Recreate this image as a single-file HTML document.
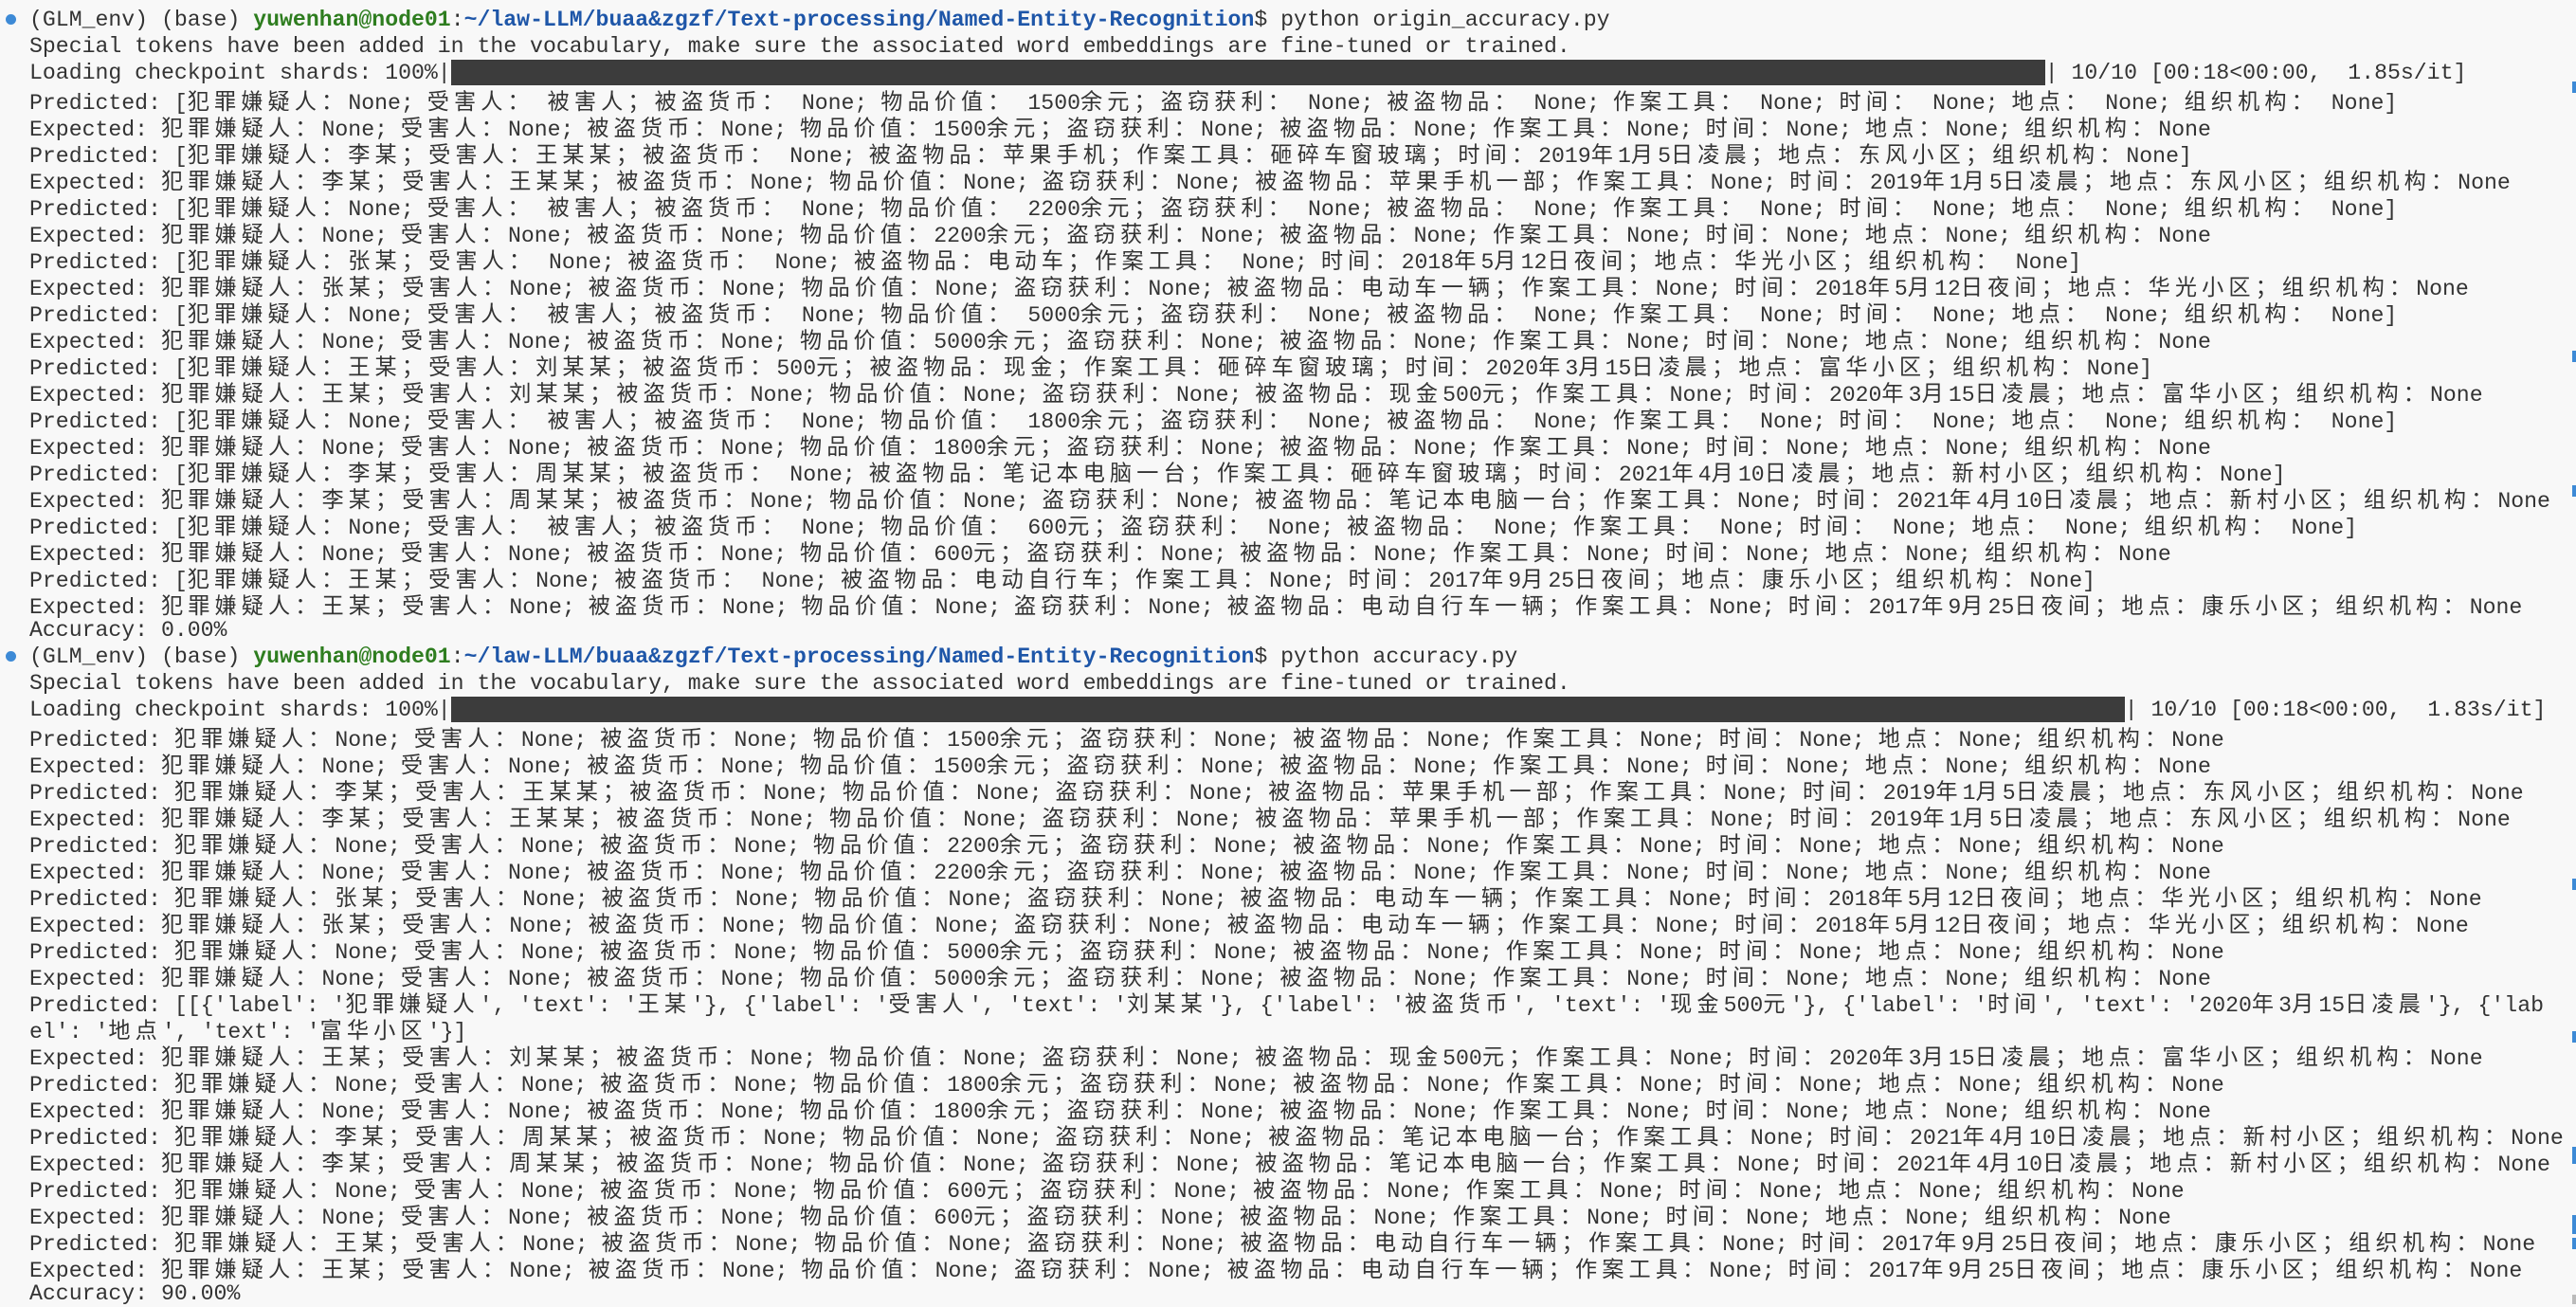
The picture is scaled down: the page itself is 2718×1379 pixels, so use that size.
<!DOCTYPE html>
<html><head><meta charset="utf-8">
<style>
html,body{margin:0;padding:0;background:#f8f8f8;width:2718px;height:1376px;overflow:hidden;}
#t{position:absolute;left:31px;top:7px;font-family:"Liberation Mono","Noto Sans CJK SC",monospace;font-size:23.17px;line-height:28px;color:#333;}
#t div{height:28px;white-space:pre;overflow:visible;}
.c{font-family:"Noto Sans CJK SC","WenQuanYi Zen Hei",sans-serif;letter-spacing:5.1px;line-height:28px;}
.g{color:#2e7d1f;font-weight:bold;}
.b{color:#1e56a8;font-weight:bold;}
.bar{display:inline-block;height:27px;background:#3c3c3c;vertical-align:top;}
.dot{position:absolute;left:6px;width:11px;height:11px;border-radius:50%;background:#3d8ad6;}
.m{position:absolute;left:2714px;width:4px;height:12px;background:#3d8ad6;}
</style></head><body>
<div class="dot" style="top:15px"></div>
<div class="dot" style="top:687px"></div>
<div class="m" style="top:86px"></div>
<div class="m" style="top:370px"></div>
<div class="m" style="top:512px"></div>
<div class="m" style="top:927px"></div>
<div class="m" style="top:1088px"></div>
<div class="m" style="top:1210px;height:18px"></div>
<div class="m" style="top:1282px;height:20px"></div>
<div class="m" style="top:1306px"></div>
<div class="m" style="top:1366px;height:10px;background:#bbb"></div>
<div id="t"><div>(GLM_env) (base) <span class="g">yuwenhan@node01</span>:<span class="b">~/law-LLM/buaa&amp;zgzf/Text-processing/Named-Entity-Recognition</span>$ python origin_accuracy.py</div><div>Special tokens have been added in the vocabulary, make sure the associated word embeddings are fine-tuned or trained.</div><div>Loading checkpoint shards: 100%|<span class="bar" style="width:1682px"></span>| 10/10 [00:18&lt;00:00,  1.85s/it]</div><div>Predicted: [犯罪嫌疑人：None; 受害人： 被害人；被盗货币： None; 物品价值： 1500余元；盗窃获利： None; 被盗物品： None; 作案工具： None; 时间： None; 地点： None; 组织机构： None]</div><div>Expected: 犯罪嫌疑人：None; 受害人：None; 被盗货币：None; 物品价值：1500余元；盗窃获利：None; 被盗物品：None; 作案工具：None; 时间：None; 地点：None; 组织机构：None</div><div>Predicted: [犯罪嫌疑人：李某；受害人：王某某；被盗货币： None; 被盗物品：苹果手机；作案工具：砸碎车窗玻璃；时间：2019年1月5日凌晨；地点：东风小区；组织机构：None]</div><div>Expected: 犯罪嫌疑人：李某；受害人：王某某；被盗货币：None; 物品价值：None; 盗窃获利：None; 被盗物品：苹果手机一部；作案工具：None; 时间：2019年1月5日凌晨；地点：东风小区；组织机构：None</div><div>Predicted: [犯罪嫌疑人：None; 受害人： 被害人；被盗货币： None; 物品价值： 2200余元；盗窃获利： None; 被盗物品： None; 作案工具： None; 时间： None; 地点： None; 组织机构： None]</div><div>Expected: 犯罪嫌疑人：None; 受害人：None; 被盗货币：None; 物品价值：2200余元；盗窃获利：None; 被盗物品：None; 作案工具：None; 时间：None; 地点：None; 组织机构：None</div><div>Predicted: [犯罪嫌疑人：张某；受害人： None; 被盗货币： None; 被盗物品：电动车；作案工具： None; 时间：2018年5月12日夜间；地点：华光小区；组织机构： None]</div><div>Expected: 犯罪嫌疑人：张某；受害人：None; 被盗货币：None; 物品价值：None; 盗窃获利：None; 被盗物品：电动车一辆；作案工具：None; 时间：2018年5月12日夜间；地点：华光小区；组织机构：None</div><div>Predicted: [犯罪嫌疑人：None; 受害人： 被害人；被盗货币： None; 物品价值： 5000余元；盗窃获利： None; 被盗物品： None; 作案工具： None; 时间： None; 地点： None; 组织机构： None]</div><div>Expected: 犯罪嫌疑人：None; 受害人：None; 被盗货币：None; 物品价值：5000余元；盗窃获利：None; 被盗物品：None; 作案工具：None; 时间：None; 地点：None; 组织机构：None</div><div>Predicted: [犯罪嫌疑人：王某；受害人：刘某某；被盗货币：500元；被盗物品：现金；作案工具：砸碎车窗玻璃；时间：2020年3月15日凌晨；地点：富华小区；组织机构：None]</div><div>Expected: 犯罪嫌疑人：王某；受害人：刘某某；被盗货币：None; 物品价值：None; 盗窃获利：None; 被盗物品：现金500元；作案工具：None; 时间：2020年3月15日凌晨；地点：富华小区；组织机构：None</div><div>Predicted: [犯罪嫌疑人：None; 受害人： 被害人；被盗货币： None; 物品价值： 1800余元；盗窃获利： None; 被盗物品： None; 作案工具： None; 时间： None; 地点： None; 组织机构： None]</div><div>Expected: 犯罪嫌疑人：None; 受害人：None; 被盗货币：None; 物品价值：1800余元；盗窃获利：None; 被盗物品：None; 作案工具：None; 时间：None; 地点：None; 组织机构：None</div><div>Predicted: [犯罪嫌疑人：李某；受害人：周某某；被盗货币： None; 被盗物品：笔记本电脑一台；作案工具：砸碎车窗玻璃；时间：2021年4月10日凌晨；地点：新村小区；组织机构：None]</div><div>Expected: 犯罪嫌疑人：李某；受害人：周某某；被盗货币：None; 物品价值：None; 盗窃获利：None; 被盗物品：笔记本电脑一台；作案工具：None; 时间：2021年4月10日凌晨；地点：新村小区；组织机构：None</div><div>Predicted: [犯罪嫌疑人：None; 受害人： 被害人；被盗货币： None; 物品价值： 600元；盗窃获利： None; 被盗物品： None; 作案工具： None; 时间： None; 地点： None; 组织机构： None]</div><div>Expected: 犯罪嫌疑人：None; 受害人：None; 被盗货币：None; 物品价值：600元；盗窃获利：None; 被盗物品：None; 作案工具：None; 时间：None; 地点：None; 组织机构：None</div><div>Predicted: [犯罪嫌疑人：王某；受害人：None; 被盗货币： None; 被盗物品：电动自行车；作案工具：None; 时间：2017年9月25日夜间；地点：康乐小区；组织机构：None]</div><div>Expected: 犯罪嫌疑人：王某；受害人：None; 被盗货币：None; 物品价值：None; 盗窃获利：None; 被盗物品：电动自行车一辆；作案工具：None; 时间：2017年9月25日夜间；地点：康乐小区；组织机构：None</div><div>Accuracy: 0.00%</div><div>(GLM_env) (base) <span class="g">yuwenhan@node01</span>:<span class="b">~/law-LLM/buaa&amp;zgzf/Text-processing/Named-Entity-Recognition</span>$ python accuracy.py</div><div>Special tokens have been added in the vocabulary, make sure the associated word embeddings are fine-tuned or trained.</div><div>Loading checkpoint shards: 100%|<span class="bar" style="width:1766px"></span>| 10/10 [00:18&lt;00:00,  1.83s/it]</div><div>Predicted: 犯罪嫌疑人：None; 受害人：None; 被盗货币：None; 物品价值：1500余元；盗窃获利：None; 被盗物品：None; 作案工具：None; 时间：None; 地点：None; 组织机构：None</div><div>Expected: 犯罪嫌疑人：None; 受害人：None; 被盗货币：None; 物品价值：1500余元；盗窃获利：None; 被盗物品：None; 作案工具：None; 时间：None; 地点：None; 组织机构：None</div><div>Predicted: 犯罪嫌疑人：李某；受害人：王某某；被盗货币：None; 物品价值：None; 盗窃获利：None; 被盗物品：苹果手机一部；作案工具：None; 时间：2019年1月5日凌晨；地点：东风小区；组织机构：None</div><div>Expected: 犯罪嫌疑人：李某；受害人：王某某；被盗货币：None; 物品价值：None; 盗窃获利：None; 被盗物品：苹果手机一部；作案工具：None; 时间：2019年1月5日凌晨；地点：东风小区；组织机构：None</div><div>Predicted: 犯罪嫌疑人：None; 受害人：None; 被盗货币：None; 物品价值：2200余元；盗窃获利：None; 被盗物品：None; 作案工具：None; 时间：None; 地点：None; 组织机构：None</div><div>Expected: 犯罪嫌疑人：None; 受害人：None; 被盗货币：None; 物品价值：2200余元；盗窃获利：None; 被盗物品：None; 作案工具：None; 时间：None; 地点：None; 组织机构：None</div><div>Predicted: 犯罪嫌疑人：张某；受害人：None; 被盗货币：None; 物品价值：None; 盗窃获利：None; 被盗物品：电动车一辆；作案工具：None; 时间：2018年5月12日夜间；地点：华光小区；组织机构：None</div><div>Expected: 犯罪嫌疑人：张某；受害人：None; 被盗货币：None; 物品价值：None; 盗窃获利：None; 被盗物品：电动车一辆；作案工具：None; 时间：2018年5月12日夜间；地点：华光小区；组织机构：None</div><div>Predicted: 犯罪嫌疑人：None; 受害人：None; 被盗货币：None; 物品价值：5000余元；盗窃获利：None; 被盗物品：None; 作案工具：None; 时间：None; 地点：None; 组织机构：None</div><div>Expected: 犯罪嫌疑人：None; 受害人：None; 被盗货币：None; 物品价值：5000余元；盗窃获利：None; 被盗物品：None; 作案工具：None; 时间：None; 地点：None; 组织机构：None</div><div>Predicted: [[{'label': '犯罪嫌疑人', 'text': '王某'}, {'label': '受害人', 'text': '刘某某'}, {'label': '被盗货币', 'text': '现金500元'}, {'label': '时间', 'text': '2020年3月15日凌晨'}, {'lab</div><div>el': '地点', 'text': '富华小区'}]</div><div>Expected: 犯罪嫌疑人：王某；受害人：刘某某；被盗货币：None; 物品价值：None; 盗窃获利：None; 被盗物品：现金500元；作案工具：None; 时间：2020年3月15日凌晨；地点：富华小区；组织机构：None</div><div>Predicted: 犯罪嫌疑人：None; 受害人：None; 被盗货币：None; 物品价值：1800余元；盗窃获利：None; 被盗物品：None; 作案工具：None; 时间：None; 地点：None; 组织机构：None</div><div>Expected: 犯罪嫌疑人：None; 受害人：None; 被盗货币：None; 物品价值：1800余元；盗窃获利：None; 被盗物品：None; 作案工具：None; 时间：None; 地点：None; 组织机构：None</div><div>Predicted: 犯罪嫌疑人：李某；受害人：周某某；被盗货币：None; 物品价值：None; 盗窃获利：None; 被盗物品：笔记本电脑一台；作案工具：None; 时间：2021年4月10日凌晨；地点：新村小区；组织机构：None</div><div>Expected: 犯罪嫌疑人：李某；受害人：周某某；被盗货币：None; 物品价值：None; 盗窃获利：None; 被盗物品：笔记本电脑一台；作案工具：None; 时间：2021年4月10日凌晨；地点：新村小区；组织机构：None</div><div>Predicted: 犯罪嫌疑人：None; 受害人：None; 被盗货币：None; 物品价值：600元；盗窃获利：None; 被盗物品：None; 作案工具：None; 时间：None; 地点：None; 组织机构：None</div><div>Expected: 犯罪嫌疑人：None; 受害人：None; 被盗货币：None; 物品价值：600元；盗窃获利：None; 被盗物品：None; 作案工具：None; 时间：None; 地点：None; 组织机构：None</div><div>Predicted: 犯罪嫌疑人：王某；受害人：None; 被盗货币：None; 物品价值：None; 盗窃获利：None; 被盗物品：电动自行车一辆；作案工具：None; 时间：2017年9月25日夜间；地点：康乐小区；组织机构：None</div><div>Expected: 犯罪嫌疑人：王某；受害人：None; 被盗货币：None; 物品价值：None; 盗窃获利：None; 被盗物品：电动自行车一辆；作案工具：None; 时间：2017年9月25日夜间；地点：康乐小区；组织机构：None</div><div>Accuracy: 90.00%</div></div>
<script>
(function(){
var rows=document.querySelectorAll('#t > div');
for(var i=0;i<rows.length;i++){
  var walker=document.createTreeWalker(rows[i],NodeFilter.SHOW_TEXT,null,false);
  var nodes=[],n;
  while((n=walker.nextNode()))nodes.push(n);
  nodes.forEach(function(tn){
    var s=tn.nodeValue;
    if(!/[\u3000-\u9fff\uff00-\uffef]/.test(s))return;
    var frag=document.createDocumentFragment();
    s.split(/([\u3000-\u9fff\uff00-\uffef]+)/).forEach(function(p,k){
      if(!p)return;
      if(k%2==1){var sp=document.createElement('span');sp.className='c';sp.textContent=p;frag.appendChild(sp);}
      else frag.appendChild(document.createTextNode(p));
    });
    tn.parentNode.replaceChild(frag,tn);
  });
}
})();
</script>
</body></html>
